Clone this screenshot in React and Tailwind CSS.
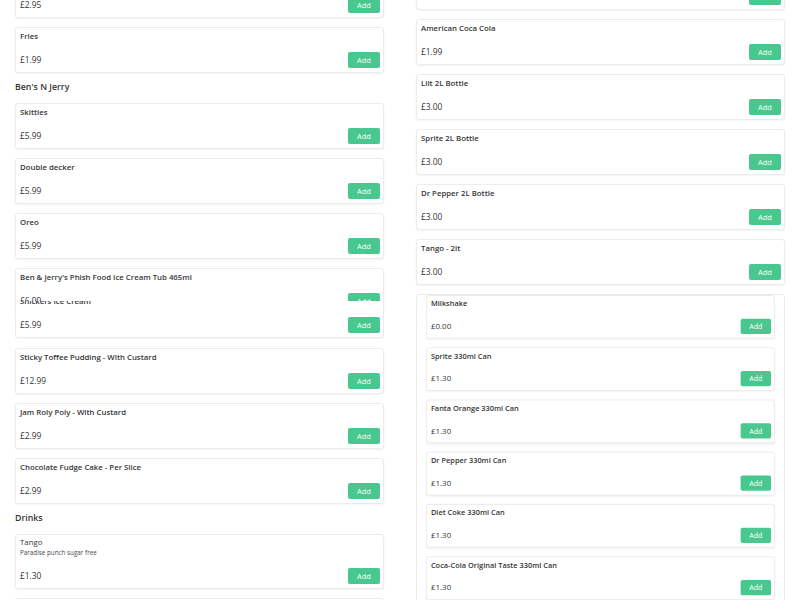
import React from 'react';

const Card = ({ name, price, desc, className = '' }) => (
  <div
    className={`flex flex-col bg-white border border-[#ececec] rounded-[3px] shadow-[0_1px_2px_rgba(10,10,10,0.05)] pl-[4px] pr-[3px] ${desc ? 'h-[55px]' : 'h-[46px]'} ${className}`}
  >
    {desc ? (
      <>
        <div className="mt-[2px] text-[7.8px] leading-[10px] text-[#363636]">{name}</div>
        <div className="mt-[1px] text-[6.3px] leading-[10px] text-[#4a4a4a]">{desc}</div>
      </>
    ) : (
      <div className="mt-[3px] text-[7.8px] leading-[10px] font-semibold text-[#363636] whitespace-nowrap">{name}</div>
    )}
    <div className="mt-auto mb-[4px] h-[16px] flex items-center justify-between">
      <span className="text-[8.4px] text-[#363636]">{price}</span>
      <button className="w-[32px] h-[16px] rounded-[2px] bg-[#48c78e] text-white text-[7.5px] leading-[16px]">
        Add
      </button>
    </div>
  </div>
);

const Heading = ({ children }) => (
  <div className="h-[12px] leading-[10px] text-[8.8px] font-semibold text-[#363636]">{children}</div>
);

const cans = [
  ['Milkshake', '£0.00'],
  ['Sprite 330ml Can', '£1.30'],
  ['Fanta Orange 330ml Can', '£1.30'],
  ['Dr Pepper 330ml Can', '£1.30'],
  ['Diet Coke 330ml Can', '£1.30'],
  ['Coca-Cola Original Taste 330ml Can', '£1.30'],
  ['7UP 330ml Can', '£1.30'],
];

export default function App() {
  return (
    <div className="w-[800px] h-[600px] overflow-hidden bg-white font-['Open_Sans',sans-serif]">
      <div className="grid grid-cols-2 gap-x-[32px] px-[15px]">
        {/* left column */}
        <div className="flex flex-col gap-[9px] -mt-[28px]">
          <Card name="Cheesy Chips" price="£2.95" />
          <Card name="Fries" price="£1.99" />
          <Heading>Ben's N Jerry</Heading>
          <Card name="Skittles" price="£5.99" />
          <Card name="Double decker" price="£5.99" />
          <Card name="Oreo" price="£5.99" />
          <Card name="Ben & Jerry's Phish Food Ice Cream Tub 465ml" price="£6.99" />
          {/* half-slid card covering the one above */}
          <div className="-mt-[22px] h-[38px] overflow-hidden">
            <Card name="Snickers Ice Cream" price="£5.99" className="-mt-[9px]" />
          </div>
          <Card name="Sticky Toffee Pudding - With Custard" price="£12.99" />
          <Card name="Jam Roly Poly - With Custard" price="£2.99" />
          <Card name="Chocolate Fudge Cake - Per Slice" price="£2.99" />
          <Heading>Drinks</Heading>
          <Card name="Tango" desc="Paradise punch sugar free" price="£1.30" />
          <Card name="Tango" desc="Tropical sugar free" price="£1.30" />
        </div>

        {/* right column */}
        <div className="flex flex-col gap-[9px] -mt-[36px]">
          <Card name="Pepsi 2L Bottle" price="£1.99" />
          <Card name="American Coca Cola" price="£1.99" />
          <Card name="Lilt 2L Bottle" price="£3.00" />
          <Card name="Sprite 2L Bottle" price="£3.00" />
          <Card name="Dr Pepper 2L Bottle" price="£3.00" />
          <Card name="Tango - 2lt" price="£3.00" />
          <div className="border border-[#ececec] rounded-[3px] h-[400px]">
            <div className="flex flex-col gap-[9px] scale-95 origin-top">
              {cans.map(([n, p]) => (
                <Card key={n} name={n} price={p} />
              ))}
            </div>
          </div>
        </div>
      </div>
    </div>
  );
}
